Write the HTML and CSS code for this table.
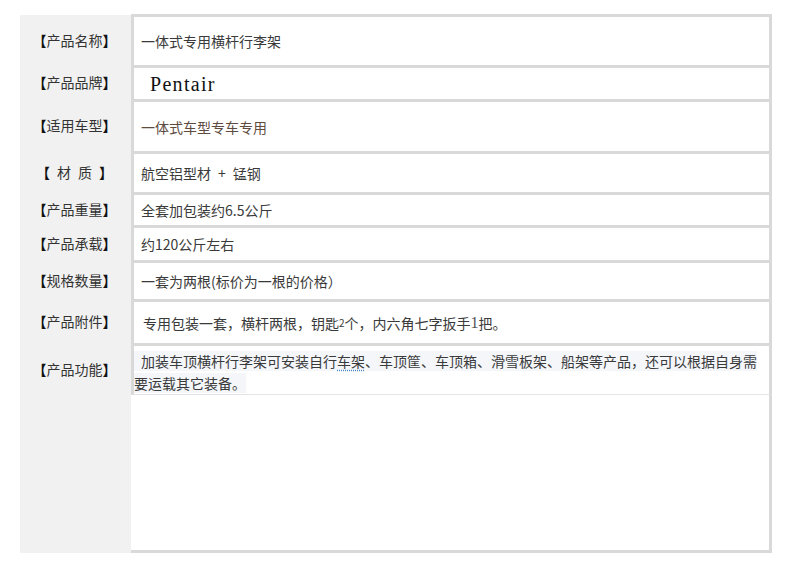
FILE: index.html
```html
<!DOCTYPE html>
<html lang="zh-CN">
<head>
<meta charset="utf-8">
<title>产品参数</title>
<link rel="stylesheet" href="styles.css">
</head>
<body>
<div class="spec">
  <div class="label label-first"><b class="br">【</b>产品名称<b class="br">】</b></div>
  <div class="value">一体式专用横杆行李架</div>

  <div class="label"><b class="br">【</b>产品品牌<b class="br">】</b></div>
  <div class="value value-brand"><span class="brand">Pentair</span></div>

  <div class="label"><b class="br">【</b>适用车型<b class="br">】</b></div>
  <div class="value value-brown">一体式车型专车专用</div>

  <div class="label"><b class="br">【</b>&ensp;材&ensp;质&ensp;<b class="br">】</b></div>
  <div class="value">航空铝型材&ensp;+&ensp;锰钢</div>

  <div class="label"><b class="br">【</b>产品重量<b class="br">】</b></div>
  <div class="value">全套加包装约6.5公斤</div>

  <div class="label"><b class="br">【</b>产品承载<b class="br">】</b></div>
  <div class="value">约120公斤左右</div>

  <div class="label"><b class="br">【</b>规格数量<b class="br">】</b></div>
  <div class="value">一套为两根(标价为一根的价格）</div>

  <div class="label"><b class="br">【</b>产品附件<b class="br">】</b></div>
  <div class="value value-indent">专用包装一套，横杆两根，钥匙<span class="small-num">2</span>个，内六角七字扳手<span class="serif-num">1</span>把。</div>

  <div class="label"><b class="br">【</b>产品功能<b class="br">】</b></div>
  <div class="value value-long">
    <div class="line"><span class="hl">&ensp;加装车顶横杆行李架可安装自行</span><span class="hl spell">车架</span><span class="hl">、车顶筐、车顶箱、滑雪板架、船架等产品，还可以根据自身需</span></div>
    <div class="line"><span class="hl">要运载其它装备。</span></div>
  </div>

  <div class="label"></div>
  <div class="value value-fill"></div>
</div>
</body>
</html>
```

FILE: styles.css
```css
html, body {
  margin: 0;
  padding: 0;
  background: #ffffff;
}

body {
  font-family: "Noto Sans CJK SC", "Noto Sans", sans-serif;
  font-size: 14px;
  color: #3a3a3a;
}

.spec {
  display: grid;
  grid-template-columns: 111px 641px;
  grid-template-rows: 51px 34px 52px 41px 33px 35px 39px 44px 52px 158px;
  margin: 14px 0 0 20px;
  width: 752px;
}

.label {
  background: #f1f1f1;
  display: flex;
  align-items: center;
  justify-content: center;
  color: #333333;
  font-size: 14px;
  line-height: 20px;
  padding-right: 2px;
}

.br {
  font-weight: 700;
  color: #111111;
}

.label-first {
  margin-top: 1px;
}

.value {
  box-sizing: border-box;
  border-top: 3px solid #d9d9d9;
  border-left: 3px solid #d9d9d9;
  border-right: 3px solid #d9d9d9;
  display: flex;
  align-items: center;
  padding-left: 7px;
  line-height: 20px;
  background: #ffffff;
}

.value-brand {
  padding-left: 16px;
}

.brand {
  font-family: "Liberation Serif", "DejaVu Serif", serif;
  font-size: 20px;
  letter-spacing: 1.3px;
  color: #111111;
}

.value-brown {
  color: #5e4c41;
}

.value-indent {
  padding-left: 9px;
}

.small-num {
  font-size: 10px;
}

.serif-num {
  font-family: "Liberation Serif", serif;
  font-size: 16px;
  color: #555555;
}

.value-long {
  display: block;
  padding: 4px 0 0 0;
  line-height: 22px;
  border-bottom: 1px solid #e4e4e4;
}

.line {
  white-space: nowrap;
}

.hl {
  background: #f4f6fa;
}

.spell {
  text-decoration: underline dotted #4a86c8;
  text-underline-offset: 3px;
}

.value-fill {
  border-top: none;
  border-left: none;
  border-bottom: 3px solid #d9d9d9;
}
```
